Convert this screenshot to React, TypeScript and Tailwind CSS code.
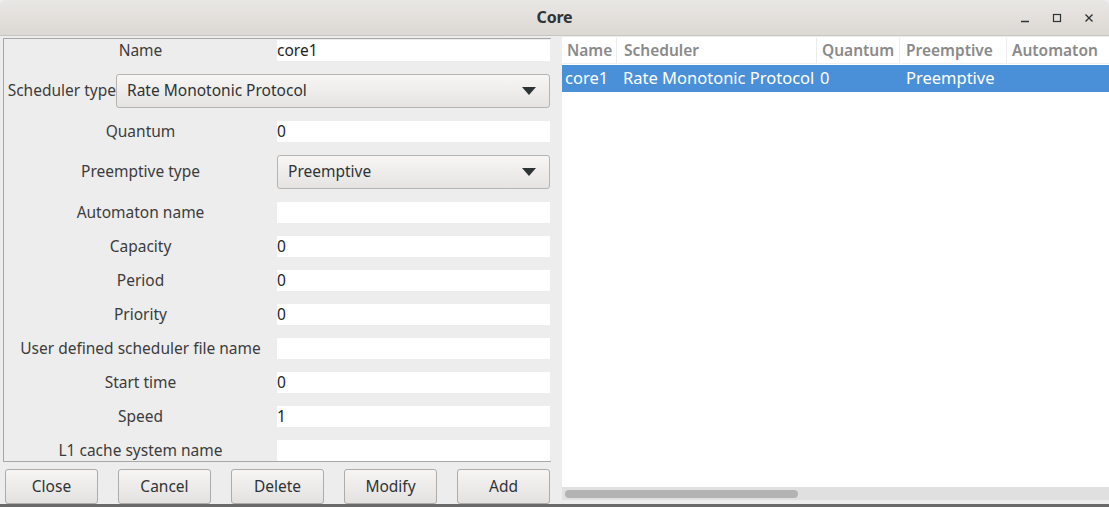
import React from "react";

const font = { fontFamily: '"Noto Sans", "Open Sans", sans-serif' };

function Input({ value }: { value?: string }) {
  return (
    <div className="h-[21px] w-[273px] bg-white text-[15.5px] leading-[21px] text-[#1e1e1e]">
      {value}
    </div>
  );
}

function Combo({ value, className }: { value: string; className?: string }) {
  return (
    <div
      className={
        "h-[34px] rounded-[3px] border border-[#b6b4b1] bg-gradient-to-b from-[#f7f6f5] to-[#e6e4e2] flex items-center pl-[10px] pr-[13px] text-[15.5px] text-[#2e3436] " +
        (className ?? "")
      }
    >
      <span className="flex-1">{value}</span>
      <svg width="14" height="8" viewBox="0 0 14 8">
        <path d="M0 0 L14 0 L7 8 Z" fill="#2e3436" />
      </svg>
    </div>
  );
}

function Row({ label, value }: { label: string; value?: string }) {
  return (
    <div className="flex items-center h-[21px]">
      <div className="w-[273px] text-center text-[15.5px] text-[#3c3c3c] whitespace-nowrap">{label}</div>
      <Input value={value} />
    </div>
  );
}

function Btn({ label }: { label: string }) {
  return (
    <div className="w-[93px] h-[35px] rounded-[3px] border border-[#aeacaa] bg-gradient-to-b from-[#f6f5f4] to-[#e4e2e0] flex items-center justify-center text-[15.5px] text-[#2e3436]">
      {label}
    </div>
  );
}

export default function App() {
  return (
    <div className="w-[1109px] h-[507px] bg-[#ededed] flex flex-col overflow-hidden" style={font}>
      {/* Title bar */}
      <div className="h-[36px] shrink-0 bg-gradient-to-b from-[#e9e7e4] to-[#dcd8d4] border-b border-[#c9c5c0] flex items-center relative rounded-t-[6px]">
        <div className="flex-1 text-center text-[16px] font-bold text-[#2e3436] tracking-[-0.2px] pb-[1px]">Core</div>
        <div className="absolute right-0 top-0 h-full flex items-center pr-[4px] text-[#2e3436]">
          <div className="w-[32px] flex justify-center">
            <svg width="10" height="10" viewBox="0 0 10 10"><path d="M1 8.5 H9" stroke="#2e3436" strokeWidth="1.5" /></svg>
          </div>
          <div className="w-[32px] flex justify-center">
            <svg width="10" height="10" viewBox="0 0 10 10"><rect x="1.5" y="1.5" width="7" height="7" fill="none" stroke="#2e3436" strokeWidth="1.2" /></svg>
          </div>
          <div className="w-[32px] flex justify-center">
            <svg width="10" height="10" viewBox="0 0 10 10"><path d="M1.5 1.5 L8.5 8.5 M8.5 1.5 L1.5 8.5" stroke="#2e3436" strokeWidth="1.4" /></svg>
          </div>
        </div>
      </div>

      <div className="flex-1 flex min-h-0">
        {/* Left pane */}
        <div className="w-[551px] shrink-0 flex flex-col pl-[3px]">
          <div className="mt-[2px] h-[424px] border border-[#a9a7a4] border-r-0 bg-[#ededed] flex flex-col gap-[13px] pt-[1px] overflow-hidden">
            <Row label="Name" value="core1" />
            <div className="flex items-center h-[34px]">
              <div className="w-[112px] text-right text-[15.5px] text-[#3c3c3c] whitespace-nowrap">Scheduler type</div>
              <Combo value="Rate Monotonic Protocol" className="w-[434px]" />
            </div>
            <Row label="Quantum" value="0" />
            <div className="flex items-center h-[34px]">
              <div className="w-[273px] text-center text-[15.5px] text-[#3c3c3c]">Preemptive type</div>
              <Combo value="Preemptive" className="w-[273px]" />
            </div>
            <Row label="Automaton name" />
            <Row label="Capacity" value="0" />
            <Row label="Period" value="0" />
            <Row label="Priority" value="0" />
            <Row label="User defined scheduler file name" />
            <Row label="Start time" value="0" />
            <Row label="Speed" value="1" />
            <Row label="L1 cache system name" />
          </div>
          <div className="mt-[7px] flex gap-[20px] pl-[2px]">
            <Btn label="Close" />
            <Btn label="Cancel" />
            <Btn label="Delete" />
            <Btn label="Modify" />
            <Btn label="Add" />
          </div>
        </div>

        {/* Splitter */}
        <div className="w-[11px] shrink-0 bg-[#ededed]" />

        {/* Right pane */}
        <div className="flex-1 bg-white flex flex-col mt-[1px] mb-[4px]">
          <div className="h-[27px] pt-[1px] flex text-[15.5px] font-semibold text-[#8a8a8a] border-b border-[#f0f0f0]">
            <div className="w-[55px] pl-[5px] border-r border-[#ececec] flex items-center">Name</div>
            <div className="w-[200px] pl-[7px] border-r border-[#ececec] flex items-center">Scheduler</div>
            <div className="w-[83px] pl-[5px] border-r border-[#ececec] flex items-center whitespace-nowrap">Quantum</div>
            <div className="w-[107px] pl-[6px] border-r border-[#ececec] flex items-center whitespace-nowrap">Preemptive</div>
            <div className="flex-1 pl-[5px] flex items-center whitespace-nowrap overflow-hidden">Automaton</div>
          </div>
          <div className="mt-[1px] h-[27px] bg-[#4a90d9] flex text-[16.5px] text-white">
            <div className="w-[55px] pl-[3px] flex items-center">core1</div>
            <div className="w-[200px] pl-[6px] flex items-center whitespace-nowrap overflow-hidden">Rate Monotonic Protocol</div>
            <div className="w-[83px] pl-[3px] flex items-center">0</div>
            <div className="w-[107px] pl-[6px] flex items-center">Preemptive</div>
            <div className="flex-1" />
          </div>
          <div className="flex-1" />
          <div className="h-[13px] bg-[#e0e0e0] flex items-center pl-[3px]">
            <div className="w-[233px] h-[8px] rounded-full bg-[#b3b3b3]" />
          </div>
        </div>
      </div>
      <div className="h-[3px] bg-[#6a6a6a] shrink-0" />
    </div>
  );
}
